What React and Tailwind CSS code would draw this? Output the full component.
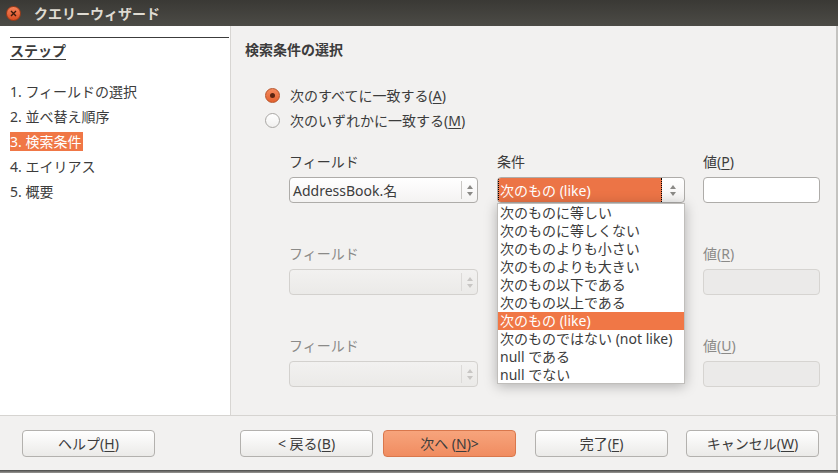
import React from 'react';

const FONT = "font-['Noto_Sans','Noto_Sans_CJK_JP',sans-serif]";

const Mn = ({ children }) => <span className="underline underline-offset-2">{children}</span>;

const Spinner = ({ disabled }) => (
    <div className="flex items-center h-full">
        <div className={`w-px h-[18px] ${disabled ? 'bg-[#dcdad8]' : 'bg-[#c9c7c4]'}`} />
        <div className="flex flex-col items-center gap-[3px] w-[15px]">
            <svg width="6" height="4" viewBox="0 0 6 4"><path d="M0 4 L3 0 L6 4 Z" fill={disabled ? '#c8c6c4' : '#8a8986'} /></svg>
            <svg width="6" height="4" viewBox="0 0 6 4"><path d="M0 0 L3 4 L6 0 Z" fill={disabled ? '#c8c6c4' : '#8a8986'} /></svg>
        </div>
    </div>
);

const FieldSelect = ({ value, disabled }) => (
    <div className={`h-[26px] w-[189px] rounded-[4px] border flex items-center justify-between pl-[3px] ${disabled ? 'border-[#d3d1ce] bg-gradient-to-b from-[#f2f1f0] to-[#ebeae8]' : 'border-[#aeaca9] bg-gradient-to-b from-white to-[#f4f3f2]'}`}>
        <span className="text-[14px] text-[#3c3c3c]">{value}</span>
        <Spinner disabled={disabled} />
    </div>
);

const ValueInput = ({ disabled }) => (
    <div className={`h-[26px] w-[117px] rounded-[4px] border ${disabled ? 'border-[#d6d4d1] bg-[#ebeae9]' : 'border-[#aeaca9] bg-white'}`} />
);

const conditions = [
    '次のものに等しい',
    '次のものに等しくない',
    '次のものよりも小さい',
    '次のものよりも大きい',
    '次のもの以下である',
    '次のもの以上である',
    '次のもの (like)',
    '次のものではない (not like)',
    'null である',
    'null でない',
];

const steps = ['1. フィールドの選択', '2. 並べ替え順序', '3. 検索条件', '4. エイリアス', '5. 概要'];

const Button = ({ children, primary, className = '' }) => (
    <button className={`h-[27px] w-[133px] rounded-[4px] border text-[14px] text-[#3c3c3c] flex items-center justify-center ${primary ? 'border-[#d9774c] bg-gradient-to-b from-[#f7a47c] to-[#f08c60]' : 'border-[#b3b1ae] bg-gradient-to-b from-white to-[#ebeae8]'} ${className}`}>
        {children}
    </button>
);

export default function App() {
    return (
        <div className={`w-[838px] h-[473px] flex flex-col bg-[#f2f1f0] ${FONT} text-[#3c3c3c] overflow-hidden`}>
            {/* title bar */}
            <div className="h-[26px] flex items-center bg-gradient-to-b from-[#3a3935] to-[#4c4b46] pr-[2px]">
                <div className="ml-[6px] w-[15px] h-[15px] rounded-full bg-gradient-to-b from-[#f58259] to-[#d94d20] border border-[#9e3a17] flex items-center justify-center">
                    <svg width="7" height="7" viewBox="0 0 7 7"><path d="M1 1 L6 6 M6 1 L1 6" stroke="#3b1a0c" strokeWidth="1.4" /></svg>
                </div>
                <span className="ml-[13px] text-[14px] font-bold text-[#dfdbd2]">クエリーウィザード</span>
            </div>

            <div className="flex-1 flex border-r-2 border-[#c4c3c0] relative">
                {/* steps */}
                <div className="w-[231px] bg-white border-r border-[#d8d6d3] pl-[10px] pr-[1px] pt-[11px]">
                    <div className="border-t border-[#3c3c3c]" />
                    <div className="mt-[3px] text-[14px] font-bold underline underline-offset-[3px] leading-[20px]">ステップ</div>
                    <div className="mt-[18px] flex flex-col">
                        {steps.map((s, i) => (
                            <div key={s} className="h-[25px] flex items-center">
                                <span className={`text-[14px] leading-[19px] ${i === 2 ? 'bg-[#f07746] text-white pr-[2px]' : ''}`}>{s}</span>
                            </div>
                        ))}
                    </div>
                </div>

                {/* criteria */}
                <div className="flex-1 pl-[14px] pt-[14px]">
                    <div className="text-[14px] font-bold leading-[20px]">検索条件の選択</div>
                    <div className="mt-[23px] ml-[20px] flex flex-col">
                        <div className="h-[25px] flex items-center gap-[10px]">
                            <div className="w-[15px] h-[15px] rounded-full border border-[#b8542a] bg-gradient-to-b from-[#f58a5c] to-[#e2612e] flex items-center justify-center">
                                <div className="w-[5px] h-[5px] rounded-full bg-[#5b2410]" />
                            </div>
                            <span className="text-[14px]">次のすべてに一致する(<Mn>A</Mn>)</span>
                        </div>
                        <div className="h-[25px] flex items-center gap-[10px]">
                            <div className="w-[15px] h-[15px] rounded-full border border-[#a9a7a4] bg-gradient-to-b from-white to-[#f1f0ef]" />
                            <span className="text-[14px]">次のいずれかに一致する(<Mn>M</Mn>)</span>
                        </div>
                    </div>

                    <div className="mt-[19px] ml-[44px] flex flex-col gap-[41px]">
                        {[0, 1, 2].map((r) => {
                            const dis = r > 0;
                            return (
                                <div key={r} className="flex gap-[19px]">
                                    <div className="flex flex-col gap-[5px]">
                                        <div className={`text-[14px] leading-[20px] ${dis ? 'text-[#8b8a88]' : ''}`}>フィールド</div>
                                        <FieldSelect value={dis ? '' : 'AddressBook.名'} disabled={dis} />
                                    </div>
                                    <div className="flex flex-col gap-[5px] w-[188px]">
                                        <div className={`text-[14px] leading-[20px] ${dis ? 'text-[#8b8a88]' : ''}`}>{r === 0 ? '条件' : ''}</div>
                                        {r === 0 && (
                                            <div className="h-[26px] w-[188px] rounded-[4px] border border-[#aeaca9] flex overflow-hidden bg-gradient-to-b from-white to-[#f4f3f2]">
                                                <div className="flex-1 bg-[#ec7446] border-x border-dotted border-black flex items-center pl-[1px]">
                                                    <span className="text-[14px] text-white">次のもの (like)</span>
                                                </div>
                                                <div className="w-[22px] flex items-center justify-center">
                                                    <div className="flex flex-col items-center gap-[3px]">
                                                        <svg width="6" height="4" viewBox="0 0 6 4"><path d="M0 4 L3 0 L6 4 Z" fill="#8a8986" /></svg>
                                                        <svg width="6" height="4" viewBox="0 0 6 4"><path d="M0 0 L3 4 L6 0 Z" fill="#8a8986" /></svg>
                                                    </div>
                                                </div>
                                            </div>
                                        )}
                                    </div>
                                    <div className="flex flex-col gap-[5px] ml-[-1px]">
                                        <div className={`text-[14px] leading-[20px] ${dis ? 'text-[#8b8a88]' : ''}`}>
                                            値(<Mn>{['P', 'R', 'U'][r]}</Mn>)
                                        </div>
                                        <ValueInput disabled={dis} />
                                    </div>
                                </div>
                            );
                        })}
                    </div>
                </div>

                {/* open dropdown list */}
                <div className="absolute left-[497px] top-[177px] w-[188px] h-[181px] bg-white border border-[#c0bebb] shadow-[0_2px_12px_rgba(0,0,0,0.28)] flex flex-col">
                    {conditions.map((c, i) => (
                        <div key={c} className={`h-[18px] flex items-center pl-[2px] text-[14px] leading-[18px] ${i === 6 ? 'bg-[#f07746] text-white' : ''}`}>
                            {c}
                        </div>
                    ))}
                </div>
            </div>

            {/* buttons */}
            <div className="h-[55px] border-t border-[#d6d4d1] border-r-2 border-r-[#c4c3c0] flex items-center pl-[22px]">
                <Button>ヘルプ(<Mn>H</Mn>)</Button>
                <Button className="ml-[85px]">&lt; 戻る(<Mn>B</Mn>)</Button>
                <Button primary className="ml-[10px]">次へ (<Mn>N</Mn>)&gt;</Button>
                <Button className="ml-[19px]">完了(<Mn>F</Mn>)</Button>
                <Button className="ml-[18px]">キャンセル(<Mn>W</Mn>)</Button>
            </div>
            <div className="h-[3px] bg-gradient-to-b from-[#4a4a48] to-[#9a9996]" />
        </div>
    );
}
